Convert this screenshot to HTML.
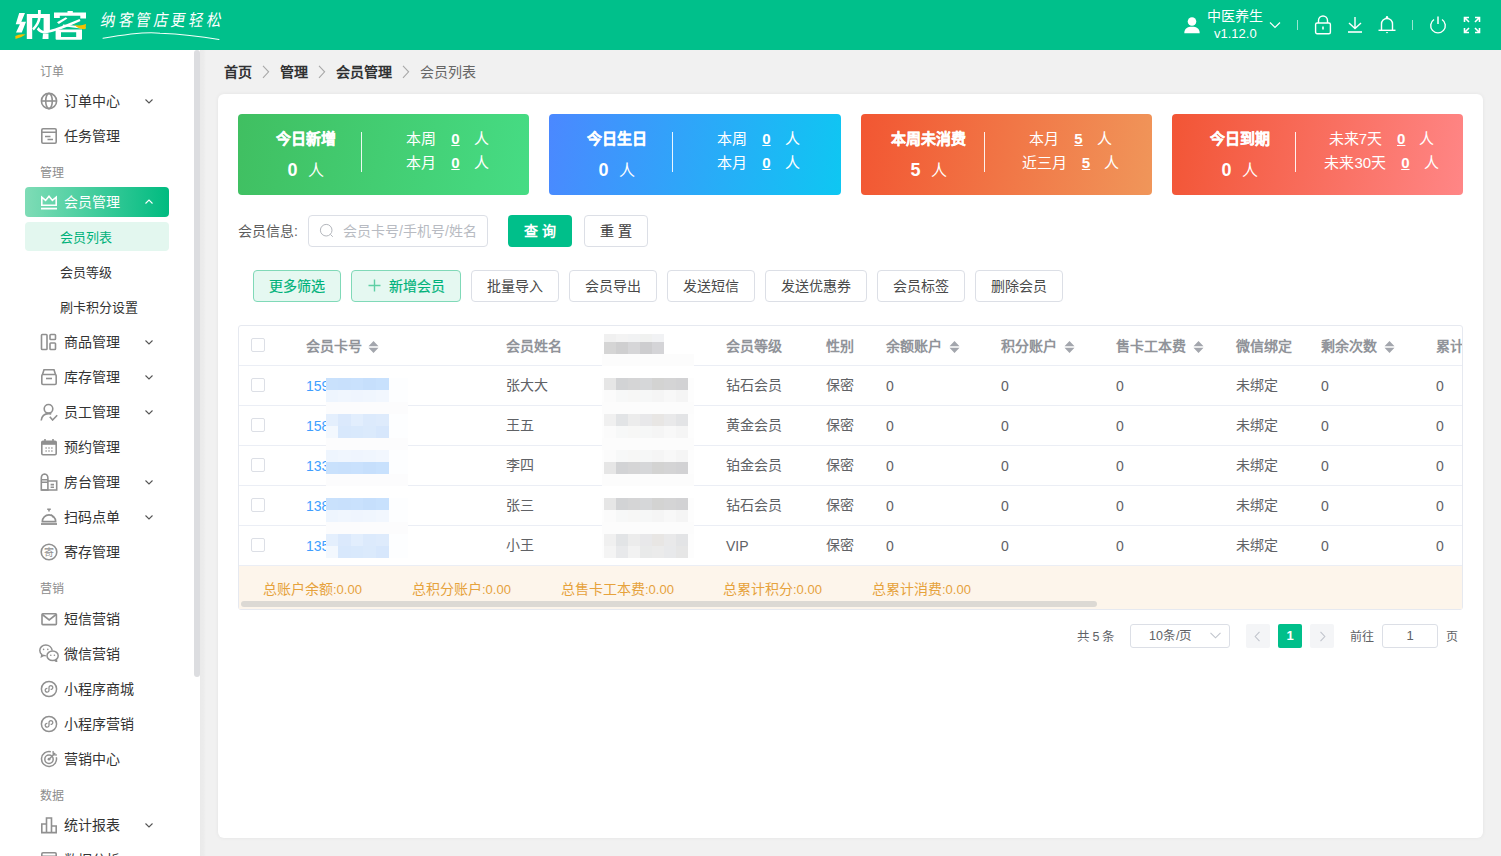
<!DOCTYPE html>
<html lang="zh-CN">
<head>
<meta charset="utf-8">
<style>
*{box-sizing:border-box;margin:0;padding:0}
html,body{width:1501px;height:856px;overflow:hidden}
body{font-family:"Liberation Sans",sans-serif;background:#f1f1f1;position:relative;color:#333}
.abs{position:absolute}
#hdr{position:absolute;left:0;top:0;width:1501px;height:50px;background:#00c08b}
#side{position:absolute;left:0;top:50px;width:200px;height:806px;background:#fff;overflow:hidden}
#sthumb{position:absolute;left:194px;top:50px;width:6px;height:627px;background:#dcdde0;border-radius:3px}
.glabel{position:absolute;left:40px;font-size:12px;color:#8c8c8c;line-height:14px}
.mi{position:absolute;left:40px;height:20px;font-size:14px;color:#333;line-height:20px;white-space:nowrap}
.mi svg{position:absolute;left:0;top:1px}
.mi span{position:absolute;left:24px;top:0}
.chev{position:absolute;left:145px;width:8px;height:5px}
.sub{position:absolute;left:60px;font-size:13px;color:#333;line-height:20px}
#card{position:absolute;left:218px;top:94px;width:1265px;height:744px;background:#fff;border-radius:6px;box-shadow:0 0 4px rgba(0,0,0,.06)}
.bc{position:absolute;top:63px;font-size:14px;line-height:18px;font-weight:bold;color:#303133}
.stat{position:absolute;top:114px;width:291px;height:81px;border-radius:4px;color:#fff}
.stat .t{position:absolute;left:0;width:135px;text-align:center;top:15px;font-size:15px;font-weight:bold;line-height:20px;-webkit-text-stroke:0.25px #fff}
.stat .n{position:absolute;left:0;width:135px;text-align:center;top:44px;font-size:16px;line-height:24px}
.stat .n b{font-size:18px;margin-right:10px}
.stat .dv{position:absolute;left:123px;top:18px;width:1px;height:40px;background:rgba(255,255,255,.9)}
.stat .r{position:absolute;left:126px;width:167px;text-align:center;font-size:15px;line-height:20px;white-space:nowrap}
.stat .r u{font-weight:bold;margin:0 14px 0 15px}
.btn{position:absolute;top:270px;height:32px;border:1px solid #dcdfe6;border-radius:4px;background:#fff;font-size:14px;color:#4a4a4a;text-align:center;line-height:31px}
.th{position:absolute;top:336px;font-size:14px;font-weight:bold;color:#909399;line-height:20px;white-space:nowrap}
.td{position:absolute;font-size:14px;color:#606266;line-height:20px;white-space:nowrap}
.rowline{position:absolute;left:239px;width:1223px;height:1px;background:#ebeef5}
.cb{position:absolute;left:251px;width:14px;height:14px;border:1px solid #dcdfe6;border-radius:2px;background:#fff}
.sum{position:absolute;top:580px;font-size:14px;color:#e6a23c;line-height:18px;white-space:nowrap}
</style>
</head>
<body>
<div id="hdr">
  <svg class="abs" style="left:0;top:0" width="100" height="50" viewBox="0 0 100 50">
<g fill="#fff">
<path d="M19.2 13 L25 13 L21.3 21.8 L26 21.8 L21.8 32.6 L16 32.6 L19.9 24.2 L15.7 24.2 Z"/>
<path d="M26.8 14 H49.9 V31 H43.6 V18 H32.2 V38.9 H26.8 Z"/>
<path d="M43 33.5 H48.5 V38.9 H42.5 Z"/>
<path d="M38 10 H40.8 V17.5 Q40 24 33.8 30.5 L32.2 28.5 Q37.8 22.5 38 17.5 Z"/>
<path d="M38.6 27 Q41 30.8 45 31 Q56 29 79.5 19 L80.5 21 Q58 31.5 45 33.5 Q39.8 33.5 36.8 29.5 Z"/>
<path d="M67.5 11 H72.8 V13 H67.5Z"/>
<path d="M54 12.5 H86 V18.5 H80.3 V15.8 H59.8 V18 H54 Z"/>
<path d="M57 22.2 L65.8 17.3 L67.4 18.6 L58.8 24 Z"/>
<path d="M63 19.2 H79 L79.5 21 L74 23.4 Z" fill="none"/>
<path d="M63 24.6 Q72 25.3 85.5 27.3 L85 28.9 Q72 27.3 62.6 26.2 Z"/>
<path d="M55.6 29.6 H82 V38.8 Q82 39.8 81 39.8 H56.6 Q55.6 39.8 55.6 38.8 Z M61 32.2 V36.9 H76.2 V32.2 Z" fill-rule="evenodd"/>
</g>
<path d="M15.3 36 Q20 33.5 25.5 34.5 Q21 38 15.5 39 Z" fill="#f5c000"/>
<path d="M73.8 24.5 Q80 26.5 86 24 L85.5 29 Q79.5 30 73.8 24.5Z" fill="#f5c000"/>
</svg>
 <div class="abs" style="left:101px;top:9px;font-size:14.5px;line-height:22px;color:#fff;transform:skewX(-10deg) scaleY(1.15);transform-origin:0 50%;letter-spacing:3.6px;font-weight:100">纳客管店更轻松</div>
 <svg class="abs" style="left:100px;top:30px" width="125" height="12" viewBox="0 0 125 12"><path d="M3 8.2 Q45 1 60 3.3 Q90 4.5 119 9.5" stroke="#f4fffa" stroke-width="1.1" fill="none" stroke-linecap="round"/></svg>
<svg class="abs" style="left:1183px;top:16px" width="18" height="18" viewBox="0 0 18 18"><circle cx="9" cy="5.5" r="4.3" fill="#fff"/><path d="M1.3 17.2 C1.3 12.5 4.5 10.8 9 10.8 C13.5 10.8 16.7 12.5 16.7 17.2 Z" fill="#fff"/></svg>
 <div class="abs" style="left:1207px;top:7px;font-size:14px;line-height:19px;color:#fff;font-weight:500">中医养生</div>
 <div class="abs" style="left:1214px;top:24px;font-size:13px;line-height:19px;color:#fff">v1.12.0</div>
 <svg class="abs" style="left:1269px;top:21px" width="12" height="8" viewBox="0 0 12 8"><path d="M1 1.5 L6 6.5 L11 1.5" stroke="#fff" stroke-width="1.2" fill="none"/></svg>
 <div class="abs" style="left:1297px;top:20px;width:1px;height:10px;background:rgba(255,255,255,.6)"></div>
 <svg class="abs" style="left:1314px;top:15px" width="18" height="20" viewBox="0 0 18 20"><rect x="1.6" y="8" width="14.8" height="10.8" rx="1.5" stroke="#fff" stroke-width="1.4" fill="none"/><path d="M4.5 8 V5.5 A4.5 4.5 0 0 1 13.5 5.5 V8" stroke="#fff" stroke-width="1.4" fill="none"/><path d="M9 11.5 V14.5" stroke="#fff" stroke-width="1.6"/></svg>
 <svg class="abs" style="left:1347px;top:16px" width="16" height="18" viewBox="0 0 16 18"><path d="M8 1 V12.5 M2 7 L8 12.5 L14 7" stroke="#fff" stroke-width="1.4" fill="none"/><path d="M1 16 H15" stroke="#fff" stroke-width="1.6"/></svg>
 <svg class="abs" style="left:1377px;top:15px" width="20" height="20" viewBox="0 0 20 20"><path d="M4.5 15 V9 A5.5 5.5 0 0 1 15.5 9 V15" stroke="#fff" stroke-width="1.4" fill="none"/><path d="M1.5 15.3 H18.5" stroke="#fff" stroke-width="1.4"/><circle cx="10" cy="2.3" r="1.2" fill="#fff"/><path d="M8.8 17 H11.2 L10 18.6Z" fill="#fff"/></svg>
 <div class="abs" style="left:1412px;top:20px;width:1px;height:10px;background:rgba(255,255,255,.6)"></div>
 <svg class="abs" style="left:1429px;top:15px" width="18" height="20" viewBox="0 0 18 20"><path d="M5 4.5 A7.3 7.3 0 1 0 13 4.5" stroke="#fff" stroke-width="1.4" fill="none"/><path d="M9 1.5 V9" stroke="#fff" stroke-width="1.5"/></svg>
 <svg class="abs" style="left:1463px;top:16px" width="18" height="18" viewBox="0 0 18 18"><g stroke="#fff" stroke-width="1.6" fill="none"><path d="M1.5 6 V1.5 H6 M1.5 1.5 L6 6"/><path d="M16.5 6 V1.5 H12 M16.5 1.5 L12 6"/><path d="M1.5 12 V16.5 H6 M1.5 16.5 L6 12"/><path d="M16.5 12 V16.5 H12 M16.5 16.5 L12 12"/></g></svg>
</div>
<div id="side"></div>
<div id="sideitems"><div class="glabel" style="top:65px">订单</div>
<div class="mi" style="top:91px"><svg width="18" height="18" viewBox="0 0 18 18"><circle cx="9" cy="9" r="7.6" stroke="#909090" stroke-width="1.6" fill="none"/><ellipse cx="9" cy="9" rx="3.3" ry="7.6" stroke="#909090" stroke-width="1.6" fill="none"/><path d="M1.4 9 H16.6" stroke="#909090" stroke-width="1.6" fill="none"/></svg><span>订单中心</span></div>
<svg class="chev" style="top:99px" width="8" height="5" viewBox="0 0 8 5"><path d="M0.5 0.5 L4 4 L7.5 0.5" stroke="#555" stroke-width="1.1" fill="none"/></svg>
<div class="mi" style="top:126px"><svg width="18" height="18" viewBox="0 0 18 18"><rect x="1.8" y="1.8" width="14.4" height="14.4" rx="1.2" stroke="#909090" stroke-width="1.6" fill="none"/><path d="M1.8 5.2 H16.2 M5 9.5 H10.5 M7.5 12.5 H13" stroke="#909090" stroke-width="1.6" fill="none"/></svg><span>任务管理</span></div>
<div class="glabel" style="top:166px">管理</div>
<div class="abs" style="left:25px;top:187px;width:144px;height:30px;border-radius:4px;background:linear-gradient(to right,#7fdcb6,#00bb80)"></div>
<div class="mi" style="top:192px;color:#fff"><svg width="18" height="18" viewBox="0 0 18 18"><path d="M1.8 12.2 V4.2 L5.6 7.4 L9 3.2 L12.4 7.4 L16.2 4.2 V12.2 Z" stroke="#fff" stroke-width="1.6" fill="none"/><path d="M1 15.6 H17" stroke="#fff" stroke-width="1.8"/></svg><span>会员管理</span></div>
<svg class="chev" style="top:199px" width="8" height="5" viewBox="0 0 8 5"><path d="M0.5 4.5 L4 1 L7.5 4.5" stroke="#fff" stroke-width="1.1" fill="none"/></svg>
<div class="abs" style="left:25px;top:222px;width:144px;height:29px;border-radius:4px;background:#e3f7ef"></div>
<div class="sub" style="top:228px;color:#00b27a">会员列表</div>
<div class="sub" style="top:263px">会员等级</div>
<div class="sub" style="top:298px">刷卡积分设置</div>
<div class="mi" style="top:332px"><svg width="18" height="18" viewBox="0 0 18 18"><rect x="1.5" y="1.5" width="5.5" height="15" rx="0.8" stroke="#909090" stroke-width="1.6" fill="none"/><rect x="10" y="1.5" width="5.5" height="5" rx="0.8" stroke="#909090" stroke-width="1.6" fill="none"/><rect x="10" y="10" width="5.5" height="6.5" rx="0.8" stroke="#909090" stroke-width="1.6" fill="none"/></svg><span>商品管理</span></div>
<svg class="chev" style="top:340px" width="8" height="5" viewBox="0 0 8 5"><path d="M0.5 0.5 L4 4 L7.5 0.5" stroke="#555" stroke-width="1.1" fill="none"/></svg>
<div class="mi" style="top:367px"><svg width="18" height="18" viewBox="0 0 18 18"><path d="M2.5 6.5 L4 1.8 H14 L15.5 6.5" stroke="#909090" stroke-width="1.6" fill="none"/><rect x="1.8" y="6.5" width="14.4" height="10" rx="1.2" stroke="#909090" stroke-width="1.6" fill="none"/><path d="M6 10.5 H12" stroke="#909090" stroke-width="1.6" fill="none"/></svg><span>库存管理</span></div>
<svg class="chev" style="top:375px" width="8" height="5" viewBox="0 0 8 5"><path d="M0.5 0.5 L4 4 L7.5 0.5" stroke="#555" stroke-width="1.1" fill="none"/></svg>
<div class="mi" style="top:402px"><svg width="18" height="18" viewBox="0 0 18 18"><circle cx="8.5" cy="5.8" r="4.3" stroke="#909090" stroke-width="1.6" fill="none"/><path d="M1.2 17.5 C1.8 12.8 4.5 10.6 8.5 10.6 C9.6 10.6 10.5 10.8 11.3 11.1" stroke="#909090" stroke-width="1.6" fill="none"/><path d="M9.8 13.8 L12.6 17 L17.2 12.2" stroke="#909090" stroke-width="1.6" fill="none"/></svg><span>员工管理</span></div>
<svg class="chev" style="top:410px" width="8" height="5" viewBox="0 0 8 5"><path d="M0.5 0.5 L4 4 L7.5 0.5" stroke="#555" stroke-width="1.1" fill="none"/></svg>
<div class="mi" style="top:437px"><svg width="18" height="18" viewBox="0 0 18 18"><rect x="1.8" y="3.2" width="14.4" height="13.5" rx="1.2" stroke="#909090" stroke-width="1.6" fill="none"/><path d="M5 1 V4.5 M13 1 V4.5" stroke="#909090" stroke-width="1.6" fill="none"/><rect x="1.8" y="3.2" width="14.4" height="3.6" fill="#909090"/><path d="M5.5 10 h1.2 M8.4 10 h1.2 M11.3 10 h1.2 M5.5 13 h1.2 M8.4 13 h1.2 M11.3 13 h1.2" stroke="#909090" stroke-width="1.3"/></svg><span>预约管理</span></div>
<div class="mi" style="top:472px"><svg width="18" height="18" viewBox="0 0 18 18"><path d="M1.3 17 V5.2 Q1.3 1.3 4.6 1 Q7.9 1.3 7.9 5.2 V17 Z M1.3 6.8 H7.9 M1.3 9.3 H7.9" stroke="#909090" stroke-width="1.6" fill="none"/><path d="M7.9 8 H16.7 V17 H1.3 M10.6 11.6 H14 M10.6 14.2 H14" stroke="#909090" stroke-width="1.6" fill="none"/></svg><span>房台管理</span></div>
<svg class="chev" style="top:480px" width="8" height="5" viewBox="0 0 8 5"><path d="M0.5 0.5 L4 4 L7.5 0.5" stroke="#555" stroke-width="1.1" fill="none"/></svg>
<div class="mi" style="top:507px"><svg width="18" height="18" viewBox="0 0 18 18"><path d="M2.3 13.6 A6.7 6.7 0 0 1 15.7 13.6 Z" stroke="#909090" stroke-width="1.6" fill="none"/><path d="M7.2 1.2 H10.8 M9 1.2 V3.5" stroke="#909090" stroke-width="1.6" fill="none"/><path d="M1 16 H17" stroke="#909090" stroke-width="1.8"/><path d="M11.2 6.8 Q12.8 7.8 13.4 9.8" stroke="#909090" stroke-width="1.3" fill="none"/></svg><span>扫码点单</span></div>
<svg class="chev" style="top:515px" width="8" height="5" viewBox="0 0 8 5"><path d="M0.5 0.5 L4 4 L7.5 0.5" stroke="#555" stroke-width="1.1" fill="none"/></svg>
<div class="mi" style="top:542px"><svg width="18" height="18" viewBox="0 0 18 18"><circle cx="9" cy="9" r="7.8" stroke="#909090" stroke-width="1.6" fill="none"/><text x="9" y="12.8" font-size="10" text-anchor="middle" fill="#909090" font-family="Liberation Sans,sans-serif">寄</text></svg><span>寄存管理</span></div>
<div class="glabel" style="top:582px">营销</div>
<div class="mi" style="top:609px"><svg width="18" height="18" viewBox="0 0 18 18"><rect x="2" y="3.8" width="14.4" height="10.8" rx="0.8" stroke="#909090" stroke-width="1.6" fill="none"/><path d="M2.3 4.5 L9.2 10 L16.1 4.5" stroke="#909090" stroke-width="1.6" fill="none"/></svg><span>短信营销</span></div>
<div class="mi" style="top:644px"><svg width="20" height="18" viewBox="0 0 20 18" style="left:-1px;top:0"><path d="M13.2 6.3 C12.7 3.2 10 1 6.8 1 C3.3 1 0.8 3.5 0.8 6.5 C0.8 8.2 1.6 9.6 2.9 10.6 L2.5 12.6 L4.8 11.4 C5.5 11.6 6.1 11.7 6.8 11.7" stroke="#909090" stroke-width="1.5" fill="none"/><ellipse cx="13.6" cy="11.8" rx="5.6" ry="4.8" stroke="#909090" stroke-width="1.5" fill="none"/><path d="M15.8 16.3 L17.6 17.6 L17.3 15.3" stroke="#909090" stroke-width="1.5" fill="none"/><circle cx="4.6" cy="5.4" r=".8" fill="#909090"/><circle cx="8.8" cy="5.4" r=".8" fill="#909090"/><circle cx="11.8" cy="11.2" r=".8" fill="#909090"/><circle cx="15.4" cy="11.2" r=".8" fill="#909090"/></svg><span>微信营销</span></div>
<div class="mi" style="top:679px"><svg width="18" height="18" viewBox="0 0 18 18"><circle cx="9" cy="9" r="7.6" stroke="#909090" stroke-width="1.5" fill="none"/><path d="M7.4 8.4 A1.9 1.9 0 1 0 9 10.2 V7.6 A1.9 1.9 0 1 1 10.6 9.4" stroke="#909090" stroke-width="1.3" fill="none"/></svg><span>小程序商城</span></div>
<div class="mi" style="top:714px"><svg width="18" height="18" viewBox="0 0 18 18"><circle cx="9" cy="9" r="7.6" stroke="#909090" stroke-width="1.5" fill="none"/><path d="M7.4 8.4 A1.9 1.9 0 1 0 9 10.2 V7.6 A1.9 1.9 0 1 1 10.6 9.4" stroke="#909090" stroke-width="1.3" fill="none"/></svg><span>小程序营销</span></div>
<div class="mi" style="top:749px"><svg width="18" height="18" viewBox="0 0 18 18"><path d="M16.3 7.2 A7.5 7.5 0 1 1 10.8 1.7" stroke="#909090" stroke-width="1.5" fill="none"/><circle cx="9" cy="9.2" r="4.2" stroke="#909090" stroke-width="1.5" fill="none"/><circle cx="9" cy="9.2" r="1.4" fill="#909090"/><path d="M9 9.2 L15.2 3" stroke="#909090" stroke-width="1.4"/><path d="M13 1.2 L13.4 4.6 L16.8 5" stroke="#909090" stroke-width="1.4" fill="none"/></svg><span>营销中心</span></div>
<div class="glabel" style="top:789px">数据</div>
<div class="mi" style="top:815px"><svg width="18" height="18" viewBox="0 0 18 18"><path d="M1.8 16.6 V8 H6.5 V16.6 M6.5 16.6 V2 H11.5 V16.6 M11.5 16.6 V10 H16.2 V16.6 H1 " stroke="#909090" stroke-width="1.6" fill="none"/></svg><span>统计报表</span></div>
<svg class="chev" style="top:823px" width="8" height="5" viewBox="0 0 8 5"><path d="M0.5 0.5 L4 4 L7.5 0.5" stroke="#555" stroke-width="1.1" fill="none"/></svg>
<div class="mi" style="top:850px"><svg width="18" height="18" viewBox="0 0 18 18"><rect x="1.8" y="1.8" width="14.4" height="14.4" rx="1.2" stroke="#909090" stroke-width="1.6" fill="none"/><path d="M1.8 5.2 H16.2 M5 9.5 H10.5 M7.5 12.5 H13" stroke="#909090" stroke-width="1.6" fill="none"/></svg><span>数据分析</span></div></div>
<div class="abs" style="left:200px;top:50px;width:6px;height:806px;background:linear-gradient(to right,#eaeaea,#ececec 60%,#f1f1f1)"></div>
<div id="sthumb"></div>
<div id="card"></div>
<div class="bc" style="left:224px">首页</div>
<svg class="abs" style="left:262px;top:65px" width="8" height="14" viewBox="0 0 8 14"><path d="M1 0.8 L6.6 6.8 L1 12.8" stroke="#a8a8a8" stroke-width="1.1" fill="none"/></svg>
<div class="bc" style="left:280px">管理</div>
<svg class="abs" style="left:318px;top:65px" width="8" height="14" viewBox="0 0 8 14"><path d="M1 0.8 L6.6 6.8 L1 12.8" stroke="#a8a8a8" stroke-width="1.1" fill="none"/></svg>
<div class="bc" style="left:336px">会员管理</div>
<svg class="abs" style="left:402px;top:65px" width="8" height="14" viewBox="0 0 8 14"><path d="M1 0.8 L6.6 6.8 L1 12.8" stroke="#a8a8a8" stroke-width="1.1" fill="none"/></svg>
<div class="bc" style="left:420px;font-weight:normal;color:#666">会员列表</div>
<div class="stat" style="left:238px;background:linear-gradient(100deg,#40bf61,#46dc84)"><div class="t">今日新增</div><div class="n"><b>0</b>人</div><div class="dv"></div><div class="r" style="top:15px">本周<u>0</u>人</div><div class="r" style="top:39px">本月<u>0</u>人</div></div>
<div class="stat" style="left:549px;width:292px;background:linear-gradient(100deg,#4b88ff,#0ec7f2)"><div class="t">今日生日</div><div class="n"><b>0</b>人</div><div class="dv"></div><div class="r" style="top:15px">本周<u>0</u>人</div><div class="r" style="top:39px">本月<u>0</u>人</div></div>
<div class="stat" style="left:861px;background:linear-gradient(100deg,#f25632,#f0965a)"><div class="t">本周未消费</div><div class="n"><b>5</b>人</div><div class="dv"></div><div class="r" style="top:15px">本月<u>5</u>人</div><div class="r" style="top:39px">近三月<u>5</u>人</div></div>
<div class="stat" style="left:1172px;background:linear-gradient(100deg,#f25535,#ff8686)"><div class="t">今日到期</div><div class="n"><b>0</b>人</div><div class="dv"></div><div class="r" style="top:15px">未来7天<u>0</u>人</div><div class="r" style="top:39px">未来30天<u>0</u>人</div></div>
<div class="abs" style="left:238px;top:221px;font-size:14px;line-height:20px;color:#5c5c5c">会员信息:</div>
<div class="abs" style="left:308px;top:215px;width:180px;height:32px;border:1px solid #dcdfe6;border-radius:4px;background:#fff"></div>
<svg class="abs" style="left:319px;top:223px" width="16" height="16" viewBox="0 0 16 16"><circle cx="7.2" cy="7.2" r="5.8" stroke="#b4b7bd" stroke-width="1" fill="none"/><path d="M11.4 11.4 L13.8 13.8" stroke="#b4b7bd" stroke-width="1"/></svg>
<div class="abs" style="left:343px;top:221px;font-size:14px;line-height:20px;color:#b8bbc2">会员卡号/手机号/姓名</div>
<div class="abs" style="left:508px;top:215px;width:64px;height:32px;border-radius:4px;background:#00bf8a;color:#fff;font-size:14px;font-weight:bold;line-height:32px;text-align:center;letter-spacing:4px;text-indent:4px">查询</div>
<div class="abs" style="left:584px;top:215px;width:64px;height:32px;border:1px solid #dcdfe6;border-radius:4px;background:#fff;color:#444;font-size:14px;line-height:30px;text-align:center;letter-spacing:4px;text-indent:4px;-webkit-text-stroke:0.2px #444">重置</div>
<div class="btn" style="left:253px;width:88px;background:#e5f8f1;border-color:#80d9b8;color:#00b27a;-webkit-text-stroke:0.2px #00b27a">更多筛选</div>
<div class="btn" style="left:351px;width:110px;background:#e5f8f1;border-color:#80d9b8;color:#00b27a;-webkit-text-stroke:0.2px #00b27a"><svg style="display:inline-block;vertical-align:-1px;margin-right:8px" width="13" height="13" viewBox="0 0 13 13"><path d="M6.5 0.5 V12.5 M0.5 6.5 H12.5" stroke="#5fcfa5" stroke-width="1.4"/></svg>新增会员</div>
<div class="btn" style="left:471px;width:88px">批量导入</div>
<div class="btn" style="left:569px;width:88px">会员导出</div>
<div class="btn" style="left:667px;width:88px">发送短信</div>
<div class="btn" style="left:765px;width:102px">发送优惠券</div>
<div class="btn" style="left:877px;width:88px">会员标签</div>
<div class="btn" style="left:975px;width:88px">删除会员</div>
<div class="abs" style="left:238px;top:325px;width:1225px;height:285px;border:1px solid #e6e9f0;border-radius:3px;background:#fff"></div>
<div class="rowline" style="top:365px"></div>
<div class="rowline" style="top:405px"></div>
<div class="rowline" style="top:445px"></div>
<div class="rowline" style="top:485px"></div>
<div class="rowline" style="top:525px"></div>
<div class="rowline" style="top:565px"></div>
<div class="abs" style="left:239px;top:566px;width:1223px;height:43px;background:#fdf5eb"></div>
<div class="abs" style="left:241px;top:601px;width:856px;height:6px;border-radius:3px;background:#dcd9d4"></div>
<div class="sum" style="left:263px">总账户余额<span style="font-size:13px">:0.00</span></div>
<div class="sum" style="left:412px">总积分账户<span style="font-size:13px">:0.00</span></div>
<div class="sum" style="left:561px">总售卡工本费<span style="font-size:13px">:0.00</span></div>
<div class="sum" style="left:723px">总累计积分<span style="font-size:13px">:0.00</span></div>
<div class="sum" style="left:872px">总累计消费<span style="font-size:13px">:0.00</span></div>
<div class="cb" style="top:338px"></div>
<div class="th" style="left:306px">会员卡号</div>
<svg class="abs" style="left:368px;top:341px" width="11" height="12" viewBox="0 0 11 12"><path d="M5.5 0 L10.5 5.2 H0.5Z M0.5 6.8 H10.5 L5.5 12Z" fill="#a3a6ad"/></svg>
<div class="th" style="left:506px">会员姓名</div>
<div class="th" style="left:726px">会员等级</div>
<div class="th" style="left:826px">性别</div>
<div class="th" style="left:886px">余额账户</div>
<svg class="abs" style="left:949px;top:341px" width="11" height="12" viewBox="0 0 11 12"><path d="M5.5 0 L10.5 5.2 H0.5Z M0.5 6.8 H10.5 L5.5 12Z" fill="#a3a6ad"/></svg>
<div class="th" style="left:1001px">积分账户</div>
<svg class="abs" style="left:1064px;top:341px" width="11" height="12" viewBox="0 0 11 12"><path d="M5.5 0 L10.5 5.2 H0.5Z M0.5 6.8 H10.5 L5.5 12Z" fill="#a3a6ad"/></svg>
<div class="th" style="left:1116px">售卡工本费</div>
<svg class="abs" style="left:1193px;top:341px" width="11" height="12" viewBox="0 0 11 12"><path d="M5.5 0 L10.5 5.2 H0.5Z M0.5 6.8 H10.5 L5.5 12Z" fill="#a3a6ad"/></svg>
<div class="th" style="left:1236px">微信绑定</div>
<div class="th" style="left:1321px">剩余次数</div>
<svg class="abs" style="left:1384px;top:341px" width="11" height="12" viewBox="0 0 11 12"><path d="M5.5 0 L10.5 5.2 H0.5Z M0.5 6.8 H10.5 L5.5 12Z" fill="#a3a6ad"/></svg>
<div class="th" style="left:1436px;width:26px;overflow:hidden">累计</div>
<div class="cb" style="top:378px"></div>
<div class="td" style="left:306px;top:376px;color:#409eff">159</div>
<div class="td" style="left:506px;top:375px">张大大</div>
<div class="td" style="left:726px;top:375px">钻石会员</div>
<div class="td" style="left:826px;top:375px">保密</div>
<div class="td" style="left:886px;top:376px">0</div>
<div class="td" style="left:1001px;top:376px">0</div>
<div class="td" style="left:1116px;top:376px">0</div>
<div class="td" style="left:1236px;top:375px">未绑定</div>
<div class="td" style="left:1321px;top:376px">0</div>
<div class="td" style="left:1436px;top:376px">0</div>
<div class="cb" style="top:418px"></div>
<div class="td" style="left:306px;top:416px;color:#409eff">158</div>
<div class="td" style="left:506px;top:415px">王五</div>
<div class="td" style="left:726px;top:415px">黄金会员</div>
<div class="td" style="left:826px;top:415px">保密</div>
<div class="td" style="left:886px;top:416px">0</div>
<div class="td" style="left:1001px;top:416px">0</div>
<div class="td" style="left:1116px;top:416px">0</div>
<div class="td" style="left:1236px;top:415px">未绑定</div>
<div class="td" style="left:1321px;top:416px">0</div>
<div class="td" style="left:1436px;top:416px">0</div>
<div class="cb" style="top:458px"></div>
<div class="td" style="left:306px;top:456px;color:#409eff">133</div>
<div class="td" style="left:506px;top:455px">李四</div>
<div class="td" style="left:726px;top:455px">铂金会员</div>
<div class="td" style="left:826px;top:455px">保密</div>
<div class="td" style="left:886px;top:456px">0</div>
<div class="td" style="left:1001px;top:456px">0</div>
<div class="td" style="left:1116px;top:456px">0</div>
<div class="td" style="left:1236px;top:455px">未绑定</div>
<div class="td" style="left:1321px;top:456px">0</div>
<div class="td" style="left:1436px;top:456px">0</div>
<div class="cb" style="top:498px"></div>
<div class="td" style="left:306px;top:496px;color:#409eff">138</div>
<div class="td" style="left:506px;top:495px">张三</div>
<div class="td" style="left:726px;top:495px">钻石会员</div>
<div class="td" style="left:826px;top:495px">保密</div>
<div class="td" style="left:886px;top:496px">0</div>
<div class="td" style="left:1001px;top:496px">0</div>
<div class="td" style="left:1116px;top:496px">0</div>
<div class="td" style="left:1236px;top:495px">未绑定</div>
<div class="td" style="left:1321px;top:496px">0</div>
<div class="td" style="left:1436px;top:496px">0</div>
<div class="cb" style="top:538px"></div>
<div class="td" style="left:306px;top:536px;color:#409eff">135</div>
<div class="td" style="left:506px;top:535px">小王</div>
<div class="td" style="left:726px;top:536px">VIP</div>
<div class="td" style="left:826px;top:535px">保密</div>
<div class="td" style="left:886px;top:536px">0</div>
<div class="td" style="left:1001px;top:536px">0</div>
<div class="td" style="left:1116px;top:536px">0</div>
<div class="td" style="left:1236px;top:535px">未绑定</div>
<div class="td" style="left:1321px;top:536px">0</div>
<div class="td" style="left:1436px;top:536px">0</div>
<!--MOSAIC-->
<div class="abs" style="left:326px;top:378px;width:82px;height:12px;background:#fdfeff"></div>
<div class="abs" style="left:326px;top:378px;width:13px;height:12px;background:#c9e1fc"></div>
<div class="abs" style="left:338px;top:378px;width:13px;height:12px;background:#c8e0fc"></div>
<div class="abs" style="left:351px;top:378px;width:13px;height:12px;background:#c9e1fd"></div>
<div class="abs" style="left:363px;top:378px;width:13px;height:12px;background:#c6dffc"></div>
<div class="abs" style="left:376px;top:378px;width:13px;height:12px;background:#c8e1fd"></div>
<div class="abs" style="left:326px;top:390px;width:82px;height:12px;background:#fdfeff"></div>
<div class="abs" style="left:326px;top:390px;width:13px;height:12px;background:#eef5fe"></div>
<div class="abs" style="left:338px;top:390px;width:13px;height:12px;background:#f0f6fe"></div>
<div class="abs" style="left:351px;top:390px;width:13px;height:12px;background:#eff5fe"></div>
<div class="abs" style="left:363px;top:390px;width:13px;height:12px;background:#f0f6fe"></div>
<div class="abs" style="left:376px;top:390px;width:13px;height:12px;background:#f2f7fe"></div>
<div class="abs" style="left:326px;top:402px;width:82px;height:12px;background:#fcfcfd"></div>
<div class="abs" style="left:326px;top:414px;width:82px;height:12px;background:#fdfeff"></div>
<div class="abs" style="left:326px;top:414px;width:13px;height:12px;background:#e4effd"></div>
<div class="abs" style="left:338px;top:414px;width:13px;height:12px;background:#dbe9fc"></div>
<div class="abs" style="left:351px;top:414px;width:13px;height:12px;background:#e2eefd"></div>
<div class="abs" style="left:363px;top:414px;width:13px;height:12px;background:#dceafc"></div>
<div class="abs" style="left:376px;top:414px;width:13px;height:12px;background:#deebfc"></div>
<div class="abs" style="left:326px;top:426px;width:82px;height:12px;background:#fdfeff"></div>
<div class="abs" style="left:326px;top:426px;width:13px;height:12px;background:#f3f8fe"></div>
<div class="abs" style="left:338px;top:426px;width:13px;height:12px;background:#d8e8fc"></div>
<div class="abs" style="left:351px;top:426px;width:13px;height:12px;background:#d9e9fc"></div>
<div class="abs" style="left:363px;top:426px;width:13px;height:12px;background:#dbeafc"></div>
<div class="abs" style="left:376px;top:426px;width:13px;height:12px;background:#d7e7fc"></div>
<div class="abs" style="left:326px;top:438px;width:82px;height:12px;background:#fcfcfd"></div>
<div class="abs" style="left:326px;top:450px;width:82px;height:12px;background:#fdfeff"></div>
<div class="abs" style="left:326px;top:450px;width:13px;height:12px;background:#eef5fe"></div>
<div class="abs" style="left:338px;top:450px;width:13px;height:12px;background:#f0f6fe"></div>
<div class="abs" style="left:351px;top:450px;width:13px;height:12px;background:#eff5fe"></div>
<div class="abs" style="left:363px;top:450px;width:13px;height:12px;background:#f0f6fe"></div>
<div class="abs" style="left:376px;top:450px;width:13px;height:12px;background:#f2f7fe"></div>
<div class="abs" style="left:326px;top:462px;width:82px;height:12px;background:#fdfeff"></div>
<div class="abs" style="left:326px;top:462px;width:13px;height:12px;background:#c9e1fc"></div>
<div class="abs" style="left:338px;top:462px;width:13px;height:12px;background:#c8e0fc"></div>
<div class="abs" style="left:351px;top:462px;width:13px;height:12px;background:#c9e1fd"></div>
<div class="abs" style="left:363px;top:462px;width:13px;height:12px;background:#c6dffc"></div>
<div class="abs" style="left:376px;top:462px;width:13px;height:12px;background:#c8e1fd"></div>
<div class="abs" style="left:326px;top:474px;width:82px;height:12px;background:#fcfcfd"></div>
<div class="abs" style="left:326px;top:498px;width:82px;height:12px;background:#fdfeff"></div>
<div class="abs" style="left:326px;top:498px;width:13px;height:12px;background:#c9e1fc"></div>
<div class="abs" style="left:338px;top:498px;width:13px;height:12px;background:#c8e0fc"></div>
<div class="abs" style="left:351px;top:498px;width:13px;height:12px;background:#c9e1fd"></div>
<div class="abs" style="left:363px;top:498px;width:13px;height:12px;background:#c6dffc"></div>
<div class="abs" style="left:376px;top:498px;width:13px;height:12px;background:#c8e1fd"></div>
<div class="abs" style="left:326px;top:510px;width:82px;height:12px;background:#fdfeff"></div>
<div class="abs" style="left:326px;top:510px;width:13px;height:12px;background:#eef5fe"></div>
<div class="abs" style="left:338px;top:510px;width:13px;height:12px;background:#f0f6fe"></div>
<div class="abs" style="left:351px;top:510px;width:13px;height:12px;background:#eff5fe"></div>
<div class="abs" style="left:363px;top:510px;width:13px;height:12px;background:#f0f6fe"></div>
<div class="abs" style="left:376px;top:510px;width:13px;height:12px;background:#f2f7fe"></div>
<div class="abs" style="left:326px;top:522px;width:82px;height:12px;background:#fcfcfd"></div>
<div class="abs" style="left:326px;top:534px;width:82px;height:12px;background:#fdfeff"></div>
<div class="abs" style="left:326px;top:534px;width:13px;height:12px;background:#e4effd"></div>
<div class="abs" style="left:338px;top:534px;width:13px;height:12px;background:#dbe9fc"></div>
<div class="abs" style="left:351px;top:534px;width:13px;height:12px;background:#e2eefd"></div>
<div class="abs" style="left:363px;top:534px;width:13px;height:12px;background:#dceafc"></div>
<div class="abs" style="left:376px;top:534px;width:13px;height:12px;background:#deebfc"></div>
<div class="abs" style="left:326px;top:546px;width:82px;height:12px;background:#fdfeff"></div>
<div class="abs" style="left:326px;top:546px;width:13px;height:12px;background:#f3f8fe"></div>
<div class="abs" style="left:338px;top:546px;width:13px;height:12px;background:#d8e8fc"></div>
<div class="abs" style="left:351px;top:546px;width:13px;height:12px;background:#d9e9fc"></div>
<div class="abs" style="left:363px;top:546px;width:13px;height:12px;background:#dbeafc"></div>
<div class="abs" style="left:376px;top:546px;width:13px;height:12px;background:#d7e7fc"></div>
<div class="abs" style="left:604px;top:334px;width:12px;height:8px;background:#f0f0f0"></div>
<div class="abs" style="left:604px;top:342px;width:12px;height:12px;background:#d5d5d5"></div>
<div class="abs" style="left:616px;top:334px;width:12px;height:8px;background:#f3f3f3"></div>
<div class="abs" style="left:616px;top:342px;width:12px;height:12px;background:#cfcfd0"></div>
<div class="abs" style="left:628px;top:334px;width:12px;height:8px;background:#f1f2f3"></div>
<div class="abs" style="left:628px;top:342px;width:12px;height:12px;background:#d6d6d8"></div>
<div class="abs" style="left:640px;top:334px;width:12px;height:8px;background:#f0f1f0"></div>
<div class="abs" style="left:640px;top:342px;width:12px;height:12px;background:#cdcdcf"></div>
<div class="abs" style="left:652px;top:334px;width:12px;height:8px;background:#f1f2f4"></div>
<div class="abs" style="left:652px;top:342px;width:12px;height:12px;background:#d4d4d7"></div>
<div class="abs" style="left:602px;top:354px;width:92px;height:12px;background:#fcfcfc"></div>
<div class="abs" style="left:602px;top:378px;width:92px;height:12px;background:#fdfdfd"></div>
<div class="abs" style="left:604px;top:378px;width:12px;height:12px;background:#e6e6e6"></div>
<div class="abs" style="left:616px;top:378px;width:12px;height:12px;background:#d2d3d5"></div>
<div class="abs" style="left:628px;top:378px;width:12px;height:12px;background:#d5d5d6"></div>
<div class="abs" style="left:640px;top:378px;width:12px;height:12px;background:#d6d7d9"></div>
<div class="abs" style="left:652px;top:378px;width:12px;height:12px;background:#d3d3d2"></div>
<div class="abs" style="left:664px;top:378px;width:12px;height:12px;background:#d4d4d5"></div>
<div class="abs" style="left:676px;top:378px;width:12px;height:12px;background:#d2d2d4"></div>
<div class="abs" style="left:602px;top:390px;width:92px;height:12px;background:#fdfdfd"></div>
<div class="abs" style="left:604px;top:390px;width:12px;height:12px;background:#fbfbfb"></div>
<div class="abs" style="left:616px;top:390px;width:12px;height:12px;background:#f7f8f8"></div>
<div class="abs" style="left:628px;top:390px;width:12px;height:12px;background:#f7f7f6"></div>
<div class="abs" style="left:640px;top:390px;width:12px;height:12px;background:#f6f7f7"></div>
<div class="abs" style="left:652px;top:390px;width:12px;height:12px;background:#f5f5f5"></div>
<div class="abs" style="left:664px;top:390px;width:12px;height:12px;background:#f8f8f8"></div>
<div class="abs" style="left:676px;top:390px;width:12px;height:12px;background:#f5f5f5"></div>
<div class="abs" style="left:602px;top:402px;width:92px;height:12px;background:#fcfcfc"></div>
<div class="abs" style="left:602px;top:414px;width:92px;height:12px;background:#fdfdfd"></div>
<div class="abs" style="left:604px;top:414px;width:12px;height:12px;background:#f0f0f0"></div>
<div class="abs" style="left:616px;top:414px;width:12px;height:12px;background:#e2e4e6"></div>
<div class="abs" style="left:628px;top:414px;width:12px;height:12px;background:#ececec"></div>
<div class="abs" style="left:640px;top:414px;width:12px;height:12px;background:#e8e8ea"></div>
<div class="abs" style="left:652px;top:414px;width:12px;height:12px;background:#e8e6e4"></div>
<div class="abs" style="left:664px;top:414px;width:12px;height:12px;background:#e9e9ea"></div>
<div class="abs" style="left:676px;top:414px;width:12px;height:12px;background:#e3e4e6"></div>
<div class="abs" style="left:602px;top:426px;width:92px;height:12px;background:#fdfdfd"></div>
<div class="abs" style="left:604px;top:426px;width:12px;height:12px;background:#fbfbfb"></div>
<div class="abs" style="left:616px;top:426px;width:12px;height:12px;background:#f7f8f8"></div>
<div class="abs" style="left:628px;top:426px;width:12px;height:12px;background:#f7f7f6"></div>
<div class="abs" style="left:640px;top:426px;width:12px;height:12px;background:#f6f7f7"></div>
<div class="abs" style="left:652px;top:426px;width:12px;height:12px;background:#f5f5f5"></div>
<div class="abs" style="left:664px;top:426px;width:12px;height:12px;background:#f8f8f8"></div>
<div class="abs" style="left:676px;top:426px;width:12px;height:12px;background:#f5f5f5"></div>
<div class="abs" style="left:602px;top:438px;width:92px;height:12px;background:#fcfcfc"></div>
<div class="abs" style="left:602px;top:450px;width:92px;height:12px;background:#fdfdfd"></div>
<div class="abs" style="left:604px;top:450px;width:12px;height:12px;background:#fbfbfb"></div>
<div class="abs" style="left:616px;top:450px;width:12px;height:12px;background:#f7f8f8"></div>
<div class="abs" style="left:628px;top:450px;width:12px;height:12px;background:#f7f7f6"></div>
<div class="abs" style="left:640px;top:450px;width:12px;height:12px;background:#f6f7f7"></div>
<div class="abs" style="left:652px;top:450px;width:12px;height:12px;background:#f5f5f5"></div>
<div class="abs" style="left:664px;top:450px;width:12px;height:12px;background:#f8f8f8"></div>
<div class="abs" style="left:676px;top:450px;width:12px;height:12px;background:#f5f5f5"></div>
<div class="abs" style="left:602px;top:462px;width:92px;height:12px;background:#fdfdfd"></div>
<div class="abs" style="left:604px;top:462px;width:12px;height:12px;background:#e6e6e6"></div>
<div class="abs" style="left:616px;top:462px;width:12px;height:12px;background:#d2d3d5"></div>
<div class="abs" style="left:628px;top:462px;width:12px;height:12px;background:#d5d5d6"></div>
<div class="abs" style="left:640px;top:462px;width:12px;height:12px;background:#d6d7d9"></div>
<div class="abs" style="left:652px;top:462px;width:12px;height:12px;background:#d3d3d2"></div>
<div class="abs" style="left:664px;top:462px;width:12px;height:12px;background:#d4d4d5"></div>
<div class="abs" style="left:676px;top:462px;width:12px;height:12px;background:#d2d2d4"></div>
<div class="abs" style="left:602px;top:474px;width:92px;height:12px;background:#fcfcfc"></div>
<div class="abs" style="left:602px;top:498px;width:92px;height:12px;background:#fdfdfd"></div>
<div class="abs" style="left:604px;top:498px;width:12px;height:12px;background:#e6e6e6"></div>
<div class="abs" style="left:616px;top:498px;width:12px;height:12px;background:#d2d3d5"></div>
<div class="abs" style="left:628px;top:498px;width:12px;height:12px;background:#d5d5d6"></div>
<div class="abs" style="left:640px;top:498px;width:12px;height:12px;background:#d6d7d9"></div>
<div class="abs" style="left:652px;top:498px;width:12px;height:12px;background:#d3d3d2"></div>
<div class="abs" style="left:664px;top:498px;width:12px;height:12px;background:#d4d4d5"></div>
<div class="abs" style="left:676px;top:498px;width:12px;height:12px;background:#d2d2d4"></div>
<div class="abs" style="left:602px;top:510px;width:92px;height:12px;background:#fdfdfd"></div>
<div class="abs" style="left:604px;top:510px;width:12px;height:12px;background:#fbfbfb"></div>
<div class="abs" style="left:616px;top:510px;width:12px;height:12px;background:#f7f8f8"></div>
<div class="abs" style="left:628px;top:510px;width:12px;height:12px;background:#f7f7f6"></div>
<div class="abs" style="left:640px;top:510px;width:12px;height:12px;background:#f6f7f7"></div>
<div class="abs" style="left:652px;top:510px;width:12px;height:12px;background:#f5f5f5"></div>
<div class="abs" style="left:664px;top:510px;width:12px;height:12px;background:#f8f8f8"></div>
<div class="abs" style="left:676px;top:510px;width:12px;height:12px;background:#f5f5f5"></div>
<div class="abs" style="left:602px;top:522px;width:92px;height:12px;background:#fcfcfc"></div>
<div class="abs" style="left:602px;top:534px;width:92px;height:12px;background:#fdfdfd"></div>
<div class="abs" style="left:604px;top:534px;width:12px;height:12px;background:#f0f0f0"></div>
<div class="abs" style="left:616px;top:534px;width:12px;height:12px;background:#e2e4e6"></div>
<div class="abs" style="left:628px;top:534px;width:12px;height:12px;background:#ececec"></div>
<div class="abs" style="left:640px;top:534px;width:12px;height:12px;background:#e8e8ea"></div>
<div class="abs" style="left:652px;top:534px;width:12px;height:12px;background:#e8e6e4"></div>
<div class="abs" style="left:664px;top:534px;width:12px;height:12px;background:#e9e9ea"></div>
<div class="abs" style="left:676px;top:534px;width:12px;height:12px;background:#e3e4e6"></div>
<div class="abs" style="left:602px;top:546px;width:92px;height:12px;background:#fdfdfd"></div>
<div class="abs" style="left:604px;top:546px;width:12px;height:12px;background:#f4f4f4"></div>
<div class="abs" style="left:616px;top:546px;width:12px;height:12px;background:#e8e9eb"></div>
<div class="abs" style="left:628px;top:546px;width:12px;height:12px;background:#f2f2f2"></div>
<div class="abs" style="left:640px;top:546px;width:12px;height:12px;background:#e9eaea"></div>
<div class="abs" style="left:652px;top:546px;width:12px;height:12px;background:#ebebeb"></div>
<div class="abs" style="left:664px;top:546px;width:12px;height:12px;background:#e8e9eb"></div>
<div class="abs" style="left:676px;top:546px;width:12px;height:12px;background:#e6e6e6"></div>
<!--/MOSAIC-->
<div class="abs" style="left:1077px;top:627px;font-size:12.5px;line-height:20px;color:#606266;word-spacing:-1px">共 5 条</div>
<div class="abs" style="left:1130px;top:624px;width:100px;height:24px;border:1px solid #dcdfe6;border-radius:3px;background:#fff"></div>
<div class="abs" style="left:1149px;top:626px;font-size:12.5px;line-height:20px;color:#606266">10条/页</div>
<svg class="abs" style="left:1210px;top:632px" width="11" height="7" viewBox="0 0 11 7"><path d="M0.5 0.8 L5.5 5.8 L10.5 0.8" stroke="#c0c4cc" stroke-width="1.1" fill="none"/></svg>
<div class="abs" style="left:1246px;top:624px;width:24px;height:24px;border-radius:2px;background:#f4f5f7"></div>
<svg class="abs" style="left:1254px;top:631px" width="7" height="11" viewBox="0 0 7 11"><path d="M5.5 0.8 L1.2 5.5 L5.5 10.2" stroke="#c0c4cc" stroke-width="1.1" fill="none"/></svg>
<div class="abs" style="left:1278px;top:624px;width:24px;height:24px;border-radius:2px;background:#00bf8a;color:#fff;font-size:13px;font-weight:bold;line-height:24px;text-align:center">1</div>
<div class="abs" style="left:1310px;top:624px;width:24px;height:24px;border-radius:2px;background:#f4f5f7"></div>
<svg class="abs" style="left:1319px;top:631px" width="7" height="11" viewBox="0 0 7 11"><path d="M1.5 0.8 L5.8 5.5 L1.5 10.2" stroke="#c0c4cc" stroke-width="1.1" fill="none"/></svg>
<div class="abs" style="left:1350px;top:627px;font-size:12px;line-height:20px;color:#606266">前往</div>
<div class="abs" style="left:1382px;top:624px;width:56px;height:24px;border:1px solid #dcdfe6;border-radius:3px;background:#fff;font-size:13px;line-height:22px;text-align:center;color:#606266">1</div>
<div class="abs" style="left:1446px;top:627px;font-size:12px;line-height:20px;color:#606266">页</div>
</body>
</html>
